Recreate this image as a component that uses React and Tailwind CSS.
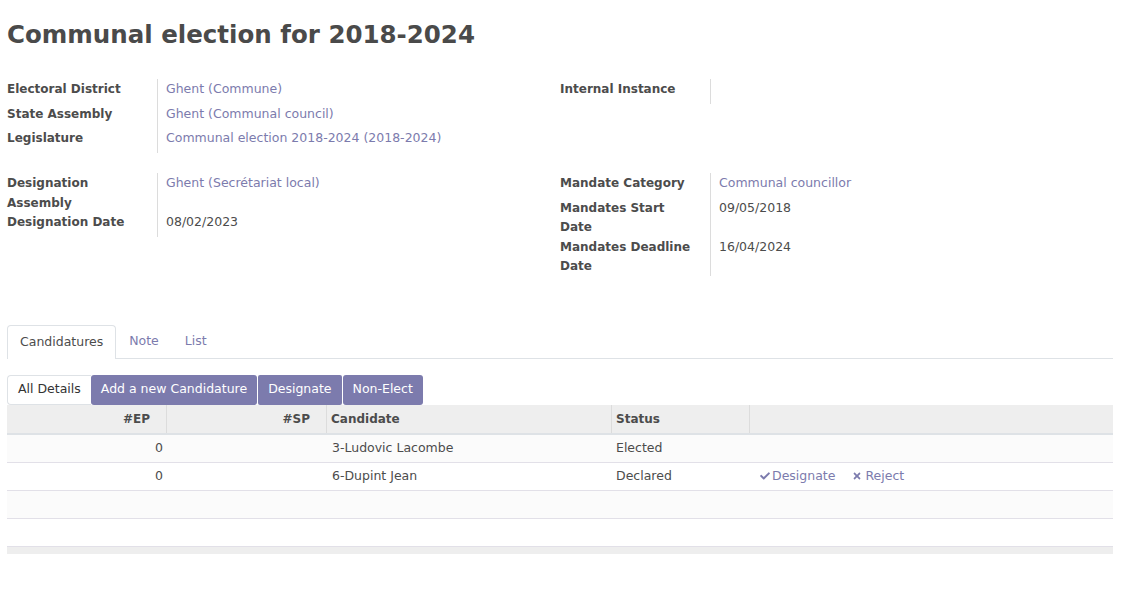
import { FaCheck, FaTimes } from 'react-icons/fa';

const font = { fontFamily: '"DejaVu Sans", "Liberation Sans", sans-serif' };

function Field({ label, children, link }) {
  return (
    <div className="flex">
      <div className="w-[150px] pr-[14px] pt-px -mb-px font-bold text-[12px] text-[#4c4c4c] leading-[19.5px]">{label}</div>
      <div className={`pl-[8px] border-l border-[#dcdcdc] leading-[19.5px] min-h-[24.5px] flex-1 ${link ? 'text-[#7c7bad]' : 'text-[#4c4c4c]'}`}>
        {children}
      </div>
    </div>
  );
}

function Group({ children }) {
  return <div className="flex flex-col w-[553px]">{children}</div>;
}

const rows = [
  { ep: '0', name: '3-Ludovic Lacombe', status: 'Elected', actions: false },
  { ep: '0', name: '6-Dupint Jean', status: 'Declared', actions: true },
];

export default function App() {
  return (
    <div className="bg-white min-h-[594px] text-[12.5px] text-[#4c4c4c] px-[7px]" style={font}>
      <h1 className="text-[24.5px] font-bold text-[#4a4a4a] pt-[17px] leading-[36px]">Communal election for 2018-2024</h1>

      {/* first groups */}
      <div className="flex mt-[26px]">
        <Group>
          <Field label="Electoral District" link>Ghent (Commune)</Field>
          <Field label="State Assembly" link>Ghent (Communal council)</Field>
          <Field label="Legislature" link>Communal election 2018-2024 (2018-2024)</Field>
        </Group>
        <Group>
          <Field label="Internal Instance">&nbsp;</Field>
        </Group>
      </div>

      {/* second groups */}
      <div className="flex mt-[20.5px]">
        <Group>
          <Field label="Designation Assembly" link>Ghent (Secrétariat local)</Field>
          <Field label="Designation Date">08/02/2023</Field>
        </Group>
        <Group>
          <Field label="Mandate Category" link>Communal councillor</Field>
          <Field label="Mandates Start Date">09/05/2018</Field>
          <Field label="Mandates Deadline Date">16/04/2024</Field>
        </Group>
      </div>

      {/* tabs */}
      <div className="mt-[49px] w-[1106px] flex border-b border-[#dee2e6] h-[34px]">
        <div className="px-[12px] border border-b-0 border-[#dee2e6] rounded-t bg-white -mb-px flex items-center text-[#4c4c4c]">Candidatures</div>
        <div className="px-[13px] flex items-center text-[#7c7bad]">Note</div>
        <div className="px-[13px] flex items-center text-[#7c7bad]">List</div>
      </div>

      {/* buttons */}
      <div className="mt-[16px] flex h-[30px]">
        <div className="px-[10px] flex items-center border border-r-0 border-[#dee2e6] rounded-l bg-white text-[#333]">All Details</div>
        <div className="px-[10px] flex items-center bg-[#7c7bad] text-white rounded-[3px]">Add a new Candidature</div>
        <div className="px-[10px] flex items-center bg-[#7c7bad] text-white rounded-[2px] ml-px">Designate</div>
        <div className="px-[10px] flex items-center bg-[#7c7bad] text-white rounded-[3px] ml-px">Non-Elect</div>
      </div>

      {/* table */}
      <div className="w-[1106px]">
        <div className="flex h-[30px] bg-[#eeeeee] border-b-2 border-[#dee2e6] font-bold text-[12px] items-center">
          <div className="w-[160px] text-right pr-[16px] border-r border-[#dcdcdc] h-full flex items-center justify-end">#EP</div>
          <div className="w-[160px] text-right pr-[16px] border-r border-[#dcdcdc] h-full flex items-center justify-end">#SP</div>
          <div className="w-[285px] pl-[4px] border-r border-[#dcdcdc] h-full flex items-center">Candidate</div>
          <div className="w-[138px] pl-[4px] border-r border-[#dcdcdc] h-full flex items-center">Status</div>
          <div className="flex-1"></div>
        </div>
        {rows.map((r, i) => (
          <div key={i} className={`flex h-[28px] items-center border-b border-[#e2e0e8] ${i % 2 === 0 ? 'bg-[#fbfbfb]' : 'bg-white'}`}>
            <div className="w-[160px] text-right pr-[4px]">{r.ep}</div>
            <div className="w-[160px]"></div>
            <div className="w-[285px] pl-[5px]">{r.name}</div>
            <div className="w-[138px] pl-[4px]">{r.status}</div>
            <div className="flex-1 pl-[10px] flex items-center gap-[17px] text-[#7c7bad]">
              {r.actions && (
                <>
                  <span className="flex items-center gap-[2px]"><FaCheck className="w-[10px] h-[10px]" />Designate</span>
                  <span className="flex items-center gap-[3px]"><FaTimes className="w-[10px] h-[10px]" />Reject</span>
                </>
              )}
            </div>
          </div>
        ))}
        <div className="h-[28px] bg-[#fbfbfb] border-b border-[#e2e0e8]"></div>
        <div className="h-[27px] bg-white"></div>
        <div className="h-[8px] bg-[#eeeeee] border-t border-[#e2e0e8]"></div>
      </div>
    </div>
  );
}
